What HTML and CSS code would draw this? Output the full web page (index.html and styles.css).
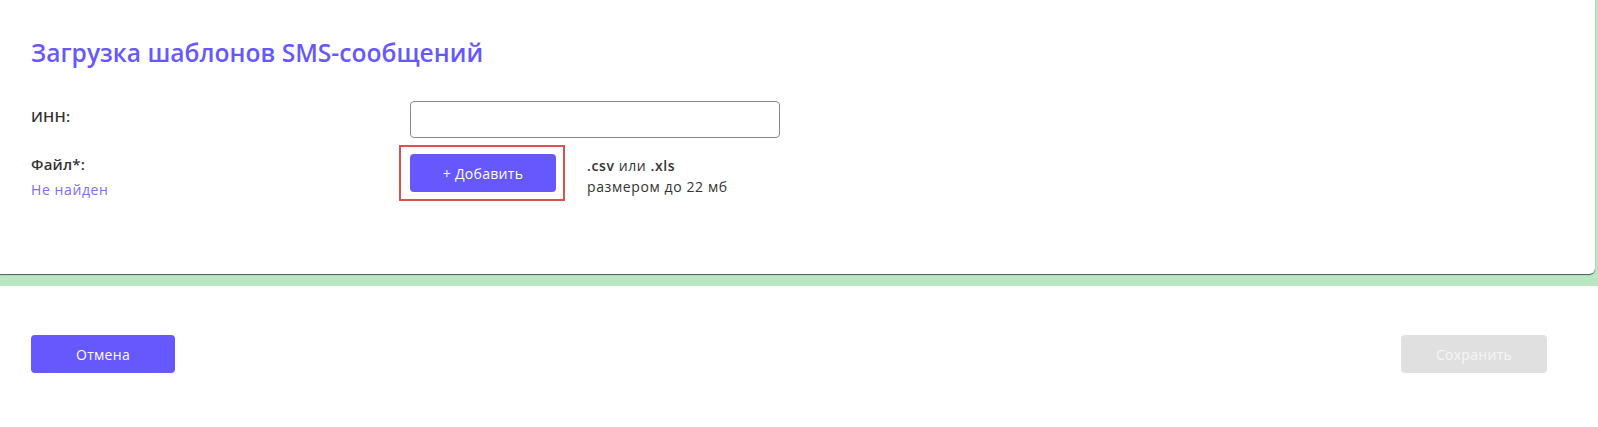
FILE: index.html
```html
<!DOCTYPE html>
<html lang="ru">
<head>
<meta charset="utf-8">
<title>Загрузка шаблонов SMS-сообщений</title>
<link rel="stylesheet" href="styles.css">
</head>
<body>
<div class="stage">
  <section class="card">
    <h1 class="title">Загрузка шаблонов SMS-сообщений</h1>
    <div class="row row-inn">
      <div class="label"><span class="label-text">ИНН:</span></div>
      <input class="input" type="text">
    </div>
    <div class="row row-file">
      <div class="label">
        <span class="label-text">Файл*:</span>
        <span class="status">Не найден</span>
      </div>
      <span class="highlight"><button class="btn btn-add">+ Добавить</button></span>
      <div class="hint">
        <div><b>.csv</b> или <b>.xls</b></div>
        <div>размером до 22 мб</div>
      </div>
    </div>
  </section>
</div>
<footer class="footer">
  <button class="btn btn-cancel">Отмена</button>
  <button class="btn btn-save" disabled>Сохранить</button>
</footer>
</body>
</html>
```
FILE: styles.css
```css
* { box-sizing: border-box; }
html, body { margin: 0; padding: 0; background: #fff; }
body {
  font-family: "Open Sans", "Noto Sans", sans-serif;
  color: #333;
  width: 1598px;
  height: 427px;
  overflow: hidden;
}
.stage {
  background: #b9e6c3;
  padding-bottom: 12px;
}
.card {
  background: #fff;
  height: 274px;
  width: 1595px;
  border-bottom-right-radius: 6px;
  box-shadow: 0 1px 1px rgba(0,0,0,0.6);
  padding: 38px 0 0 31px;
}
.title {
  margin: 0;
  font-size: 24.6px;
  line-height: 30px;
  font-weight: 600;
  color: #6658fd;
}
.row {
  display: flex;
  align-items: flex-start;
}
.row-inn { margin-top: 33px; }
.row-file { margin-top: 7px; }
.label {
  width: 379px;
  display: flex;
  flex-direction: column;
  font-size: 14px;
  letter-spacing: 0.6px;
}
.row-file .label { width: 368px; padding-top: 9px; }
.row-inn .label { padding-top: 5px; }
.label-text { font-size: 15px; font-weight: 600; color: #333; line-height: 20px; letter-spacing: 0.2px; }
.status { color: #7b6cf6; margin-top: 6px; line-height: 20px; }
.input {
  width: 370px;
  height: 37px;
  border: 1px solid #8a8a8a;
  border-radius: 4px;
  background: #fff;
}
.btn {
  font-family: inherit;
  font-size: 14px;
  letter-spacing: 0.3px;
  border: 0;
  border-radius: 4px;
  color: #fff;
  background: #6658fd;
  height: 38px;
  padding: 0;
}
.highlight {
  display: block;
  padding: 7px 7px 7px 9px;
  border: 2px solid #d9534a;
}
.btn-add { width: 146px; display: block; }
.hint {
  margin-left: 22px;
  margin-top: 10px;
  font-size: 14px;
  line-height: 21px;
  letter-spacing: 0.6px;
  color: #333;
}
.hint b { font-weight: 600; }
.footer {
  display: flex;
  justify-content: space-between;
  padding: 49px 51px 0 31px;
}
.btn-cancel { width: 144px; }
.btn-save { width: 146px; background: #e0e0e0; color: #f6f6f6; }
```
